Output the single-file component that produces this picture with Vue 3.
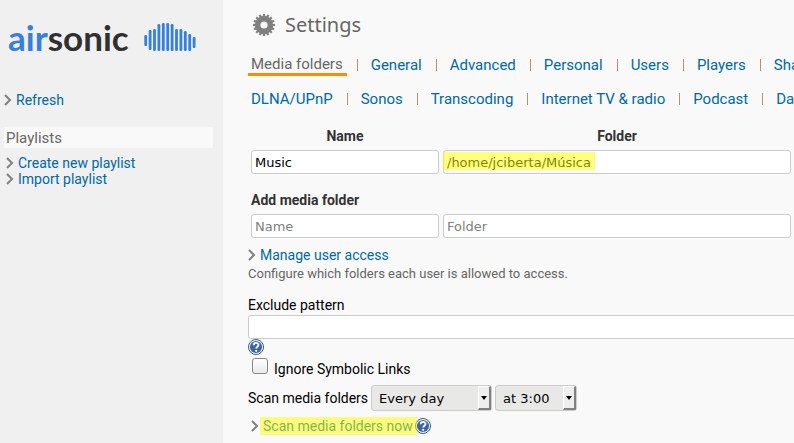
<script setup>
import { ref } from 'vue'

const firstRow = ['Media folders', 'General', 'Advanced', 'Personal', 'Users', 'Players', 'Shared media']
const secondRow = ['DLNA/UPnP', 'Sonos', 'Transcoding', 'Internet TV & radio', 'Podcast', 'Database']
const bars = [
  [13, 11], [8, 20], [7, 22], [2, 27], [1, 28], [1, 28],
  [2, 27], [7, 22], [7, 22], [9, 20], [12, 17], [15, 11]
]
const teeth = Array.from({ length: 16 }, (_, i) => i * 22.5)
const name = ref('Music')
const folder = ref('/home/jciberta/Música')
const newName = ref('')
const newFolder = ref('')
const pattern = ref('')
const ignoreLinks = ref(false)
const interval = ref('Every day')
const hour = ref('at 3:00')
</script>

<template>
  <div class="page">
    <aside class="side">
      <a class="logo" href="#" aria-label="airsonic">
        <span><span class="air">air</span>sonic</span>
        <svg width="52" height="30" viewBox="0 0 52 30" aria-hidden="true">
          <rect v-for="(b, i) in bars" :key="i" :x="0.3 + i * 4.4" :y="b[0]" width="2.8" :height="b[1]" rx="1.2" fill="#3580dd" />
        </svg>
      </a>
      <a class="forward refresh" href="#">
        <svg class="chev" viewBox="0 0 8 12" aria-hidden="true"><path d="M1 1l5 5-5 5" /></svg>Refresh
      </a>
      <h2>Playlists</h2>
      <ul>
        <li v-for="t in ['Create new playlist', 'Import playlist']" :key="t">
          <a class="forward" href="#">
            <svg class="chev" viewBox="0 0 8 12" aria-hidden="true"><path d="M1 1l5 5-5 5" /></svg>{{ t }}
          </a>
        </li>
      </ul>
    </aside>

    <main class="main">
      <h1>
        <svg width="24" height="24" viewBox="-12 -12 24 24" aria-hidden="true">
          <g fill="#808080">
            <rect v-for="a in teeth" :key="a" x="-1.1" y="-11" width="2.2" height="4" :transform="`rotate(${a})`" />
          </g>
          <circle r="6.4" fill="none" stroke="#808080" stroke-width="5.6" />
        </svg>
        Settings
      </h1>

      <nav>
        <div class="tabs">
          <template v-for="(t, i) in firstRow" :key="t">
            <span v-if="i" class="bar"></span>
            <a href="#" :class="{ current: i === 0 }">{{ t }}</a>
          </template>
        </div>
        <div class="tabs">
          <template v-for="(t, i) in secondRow" :key="t">
            <span v-if="i" class="bar"></span>
            <a href="#">{{ t }}</a>
          </template>
        </div>
      </nav>

      <form @submit.prevent>
        <table>
          <colgroup><col class="c1"><col></colgroup>
          <tbody>
            <tr class="head"><th scope="col">Name</th><th scope="col">Folder</th></tr>
            <tr>
              <td><input v-model="name" type="text" aria-label="Name"></td>
              <td class="marked"><input v-model="folder" type="text" aria-label="Folder"><span class="mark folder-mark"></span></td>
            </tr>
            <tr class="add"><th colspan="2">Add media folder</th></tr>
            <tr>
              <td><input v-model="newName" type="text" placeholder="Name" aria-label="New folder name"></td>
              <td><input v-model="newFolder" type="text" placeholder="Folder" aria-label="New folder path"></td>
            </tr>
          </tbody>
        </table>

        <a class="forward manage" href="#">
          <svg class="chev" viewBox="0 0 8 12" aria-hidden="true"><path d="M1 1l5 5-5 5" /></svg>Manage user access
        </a>
        <p class="detail">Configure which folders each user is allowed to access.</p>

        <label class="pattern" for="pattern">Exclude pattern</label>
        <input id="pattern" v-model="pattern" class="wide" type="text">
        <button class="help" type="button" aria-label="Help">
          <svg width="16" height="16" viewBox="0 0 16 16"><circle cx="8" cy="8" r="7.5" fill="#fff" stroke="#31558e" /><circle cx="8" cy="8" r="6.1" fill="#3d659f" /><path d="M5.7 6.2c0-3 4.8-2.9 4.8-.2C10.5 7.800 8.200 7.700 8.200 9.600" fill="none" stroke="#fff" stroke-width="1.800" /><circle cx="8.200" cy="11.800" r="1.100" fill="#fff" /></svg>
        </button>

        <div class="check">
          <input id="links" v-model="ignoreLinks" type="checkbox">
          <label for="links">Ignore Symbolic Links</label>
        </div>

        <div class="scan">
          <label for="interval">Scan media folders</label>
          <span class="select day">
            <select id="interval" v-model="interval"><option>Never</option><option>Every day</option></select>
            <span class="drop"></span>
          </span>
          <span class="select hour">
            <select v-model="hour" aria-label="Hour"><option>at 3:00</option><option>at 4:00</option></select>
            <span class="drop"></span>
          </span>
        </div>

        <div class="now">
          <a class="forward marked" href="#">
            <svg class="chev" viewBox="0 0 8 12" aria-hidden="true"><path d="M1 1l5 5-5 5" /></svg>Scan media folders now<span class="mark now-mark"></span>
          </a>
          <button class="help" type="button" aria-label="Help">
            <svg width="16" height="16" viewBox="0 0 16 16"><circle cx="8" cy="8" r="7.5" fill="#fff" stroke="#31558e" /><circle cx="8" cy="8" r="6.1" fill="#3d659f" /><path d="M5.7 6.2c0-3 4.8-2.9 4.8-.2C10.5 7.800 8.200 7.700 8.200 9.600" fill="none" stroke="#fff" stroke-width="1.800" /><circle cx="8.200" cy="11.800" r="1.100" fill="#fff" /></svg>
          </button>
        </div>
      </form>
    </main>
  </div>
</template>

<style>
body { margin: 0; background: #f9f9f9; }
</style>

<style scoped>
* { box-sizing: border-box; }
.page { display: flex; min-height: 100vh; overflow: hidden; font: 14px/16px Roboto, sans-serif; color: #000; }
a { color: #0068a3; text-decoration: none; white-space: nowrap; }
.side { flex: none; width: 223px; padding: 15px 10px 0 4px; background: #f0f0f0; }
.logo { display: flex; align-items: center; gap: 15px; padding-left: 4px; height: 44px; color: #303030; font: 700 35px/44px Lato, sans-serif; }
.air { color: #3580dd; }
.forward { display: flex; align-items: center; gap: 4px; }
.chev { width: 8px; height: 12px; fill: none; stroke: #808080; stroke-width: 2; }
.refresh { margin-top: 33px; }
h2 { margin: 19px 0 7px; padding: 1px 2px 0; background: #f9f9f9; color: #666; font-size: 15px; font-weight: 400; line-height: 20px; }
ul { margin: 0; padding: 0 0 0 2px; list-style: none; }
.main { flex: 1; min-width: 0; padding: 9px 0 0 25px; }
h1 { display: flex; align-items: center; gap: 9px; margin: 0; padding-left: 4px; color: #666; font: 400 20px/32px "Noto Sans", sans-serif; }
nav { overflow: hidden; margin-top: 7px; }
.tabs { display: flex; align-items: center; height: 34px; padding-left: 3px; font-size: 15px; line-height: 20px; }
.bar { flex: none; width: 1px; height: 12px; margin: 0 13px 0 14px; background: #b98f78; }
.current { margin: 0 -4px 0 -3px; padding: 0 4px 0 3px; border-bottom: 3px solid #ff8c00; color: #666; line-height: 18px; }
table { width: 100%; border-collapse: separate; border-spacing: 0; table-layout: fixed; padding: 0 3px; }
.c1 { width: 192px; }
td, th { padding: 0; }
td:first-child { padding-right: 4px; }
th { color: #333; font-weight: 700; }
.head th { height: 34px; padding-top: 6px; }
.head th:first-child { padding-right: 4px; }
.add th { height: 40px; padding-top: 12px; text-align: left; }
input[type="text"] { display: block; width: 100%; height: 24px; padding: 0 3px; border: 1px solid #ccc; border-radius: 3px; background: #fff; color: #000; font: 13px "DejaVu Sans", sans-serif; }
input::placeholder { color: #808080; opacity: 1; }
.marked { position: relative; }
.mark { position: absolute; background: rgba(255, 255, 0, 0.5); pointer-events: none; }
.folder-mark { left: 0; top: 2px; width: 152px; height: 18px; }
.now-mark { left: 9px; right: -4px; top: -1px; bottom: -1px; }
.manage { margin-top: 9px; }
.detail { margin: 3px 0 15px; color: #666; font-size: 13px; line-height: 16px; }
.pattern { display: block; margin-bottom: 2px; }
input.wide { width: calc(100% + 8px); }
.help { display: block; width: 16px; height: 16px; padding: 0; border: 0; background: none; }
.help svg { display: block; }
.check { display: flex; align-items: flex-start; gap: 6px; margin: 3px 0 8px 4px; }
.check label { padding-top: 3px; }
.check input { appearance: none; width: 16px; height: 16px; margin: 0; border: 1px solid #888; border-radius: 3px; background: linear-gradient(#fff, #eaeaea); }
.scan { display: flex; align-items: center; gap: 3px; white-space: nowrap; }
.select { position: relative; }
.day { width: 121px; }
.hour { width: 82px; }
select { appearance: none; display: block; width: 100%; height: 26px; padding: 0 7px; border: 1px solid #ccc; border-radius: 3px; background: #e8e8e7; color: #000; font: 13px "DejaVu Sans", sans-serif; }
.drop { position: absolute; top: 1px; right: 1px; width: 13px; height: 24px; border: 1px solid #fff; border-right: 2px solid #808080; border-bottom: 2px solid #808080; background: #eee; pointer-events: none; }
.drop::after { content: ""; position: absolute; left: 2px; top: 9px; border: 3px solid transparent; border-top: 4px solid #000; border-bottom: 0; }
.now { display: flex; align-items: center; gap: 2px; margin-top: 7px; padding-left: 3px; }
</style>
